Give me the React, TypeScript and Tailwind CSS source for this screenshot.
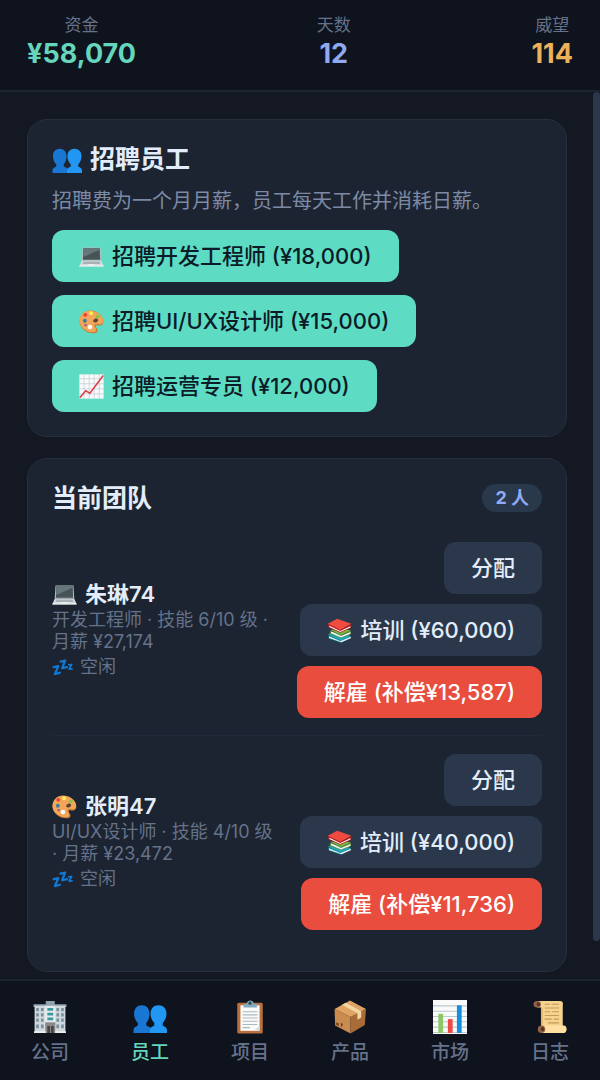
import type { ReactNode } from 'react'

type IconProps = { className: string }

function Svg({ className, children }: { className: string; children: ReactNode }) {
    return (
        <svg viewBox="0 0 64 64" className={`shrink-0 ${className}`} aria-hidden="true">
            {children}
        </svg>
    )
}

function People({ className }: IconProps) {
    return (
        <Svg className={className}>
            <path fill="#1976d2" d="M17 10c8 0 14 6 14 16 0 7-2 13-6 17v5c3 2 8 2 9 7v7H1v-6c1-6 6-6 8-8v-5C5 39 2 33 2 26c0-10 6-16 15-16z" />
            <path fill="#2196f3" d="M48 10c9 0 15 6 15 16 0 7-3 13-7 17v5c2 2 7 2 8 8v6H32v-7c1-5 6-5 8-7v-5c-4-4-7-10-7-17 0-10 6-16 15-16z" />
        </Svg>
    )
}

function Laptop({ className }: IconProps) {
    return (
        <Svg className={className}>
            <path fill="#b5bdc0" d="M9 9h46l2 34H7z" />
            <path fill="#465357" d="M11 11h42l1 29H10z" />
            <path fill="#66777a" d="M11 11h42v4L11 33z" />
            <path fill="#d8dddf" d="M7 43h50l6 13H1z" />
            <path fill="#a8b1b5" d="M11 45h42l2 6H9z" />
            <path fill="#f2f4f4" d="M1 55h62v3H1z" />
            <path fill="#eceff1" d="M25 51h14l1 4H24z" />
        </Svg>
    )
}

function Palette({ className }: IconProps) {
    return (
        <Svg className={className}>
            <path fill="#c97d36" d="M2 26C6 7 24 0 41 6c15 6 23 18 21 29-2 8-9 8-13 7-6-1-8 2-4 7 5 6 2 13-5 13C18 64-3 45 2 26z" />
            <path fill="#f2a65a" d="M2 24C7 6 25 1 41 7c15 5 22 17 20 26-2 7-9 7-13 5-8-2-11 4-7 9 5 6 3 12-4 12C17 60-3 43 2 24z" />
            <path fill="#5c4037" d="M39 26c4-3 10-1 10 3s-6 7-10 5-3-6 0-8z" />
            <circle cx="16" cy="15" r="5" fill="#f44336" />
            <circle cx="31" cy="11" r="5" fill="#ffee58" />
            <circle cx="48" cy="19" r="5" fill="#8bc34a" />
            <circle cx="15" cy="30" r="5" fill="#3e7ca0" />
            <circle cx="28" cy="46" r="6" fill="#fafafa" />
            <path fill="#8d5a97" d="M15 38l6 2-3 5-5-3z" />
        </Svg>
    )
}

function Rising({ className }: IconProps) {
    return (
        <Svg className={className}>
            <path fill="#fafafa" d="M1 1h62v62H1z" />
            <path stroke="#c3cfd6" strokeWidth="2" d="M13 1v62M26 1v62M39 1v62M52 1v62M1 12h62M1 25h62M1 38h62M1 51h62" />
            <path fill="none" stroke="#d9424a" strokeWidth="4" d="M2 61l15-18 11 6L62 4" />
        </Svg>
    )
}

function Books({ className }: IconProps) {
    return (
        <Svg className={className}>
            <path fill="#00838f" d="M3 46l26-7 33 11-23 12c-3 1-5 1-8 0L5 53z" />
            <path fill="#eceff1" d="M5 47l29 12 27-11v4L37 62 5 51z" />
            <path fill="#22a5bb" d="M2 42l26-7 34 12-27 11z" />
            <path fill="#558b2f" d="M7 33l29 10 25-11v5l-1 5-24 9L7 41z" />
            <path fill="#f5f5f5" d="M11 34l25 12 24-10v4L36 50 10 39z" />
            <path fill="#7cb342" d="M8 31l28-5 25 6-25 11z" />
            <path fill="#b71c1c" d="M2 15l32 14 28-13v3l-2 7-26 12L4 24z" />
            <path fill="#fafafa" d="M6 20l28 13 26-12v3L34 36 6 23z" />
            <path fill="#ef4b40" d="M2 15L26 2l36 13-28 15z" />
        </Svg>
    )
}

function Sleep({ className }: IconProps) {
    return (
        <Svg className={className}>
            <g fill="none" stroke="#1277cf" strokeLinejoin="round" strokeLinecap="round">
                <path strokeWidth="7" d="M5 31l14-3L9 52l15-4" />
                <path strokeWidth="7" d="M26 14l14-3-9 23 15-3" />
                <path strokeWidth="5" d="M51 24l9-1-8 14 9-1" />
            </g>
        </Svg>
    )
}

function Building({ className }: IconProps) {
    return (
        <Svg className={className}>
            <path fill="#90a4ae" d="M24 2h17v6h22v5H1V8h23z" />
            <path fill="#cfd8dc" d="M3 11h58v51H3z" />
            <path fill="#e4eaec" d="M22 11h20v51H22z" />
            <path fill="#78909c" d="M6 15h5v6H6zm9 0h5v6h-5zm29 0h5v6h-5zm9 0h5v6h-5zM6 25h5v6H6zm9 0h5v6h-5zm29 0h5v6h-5zm9 0h5v6h-5zM6 35h5v6H6zm9 0h5v6h-5zm29 0h5v6h-5zm9 0h5v6h-5zM6 46h5v7H6zm9 0h5v7h-5zm29 0h5v7h-5zm9 0h5v7h-5z" />
            <path fill="#38999f" d="M27 15h11v5H27zm0 9h11v5H27zm0 9h11v5H27z" />
            <path fill="#8b8787" d="M23 42h19v20H23z" />
            <path fill="#454545" d="M27 49h5v13h-5zm7 0h5v13h-5z" />
            <path fill="#eceff1" d="M2 59h22v3H2zm40 0h20v3H42z" />
        </Svg>
    )
}

function Clipboard({ className }: IconProps) {
    return (
        <Svg className={className}>
            <rect x="8" y="5" width="48" height="58" rx="3" fill="#b8703e" />
            <path fill="#fafafa" d="M14 10h36v48H14z" />
            <path fill="#d5dce0" d="M39 58l11-9v9z" />
            <path stroke="#abb9bf" strokeWidth="2" d="M18 22h28M18 28h28M18 34h28M18 40h28M18 46h28M18 52h14" />
            <path fill="#82aabd" d="M20 14V9c0-2 3-2 6-2 1-8 12-8 13 0 3 0 6 0 6 2v5z" />
            <circle cx="32" cy="6" r="3" fill="#344754" />
        </Svg>
    )
}

function Parcel({ className }: IconProps) {
    return (
        <Svg className={className}>
            <path fill="#c98c4e" d="M3 17l30 15v31L4 48z" />
            <path fill="#a86c38" d="M33 32l29-15-2 30-27 16z" />
            <path fill="#dfa364" d="M3 17L32 1l30 16-29 15z" />
            <path fill="#f4d5a4" d="M17 9l7-4 29 16v12l-7 4V25z" />
            <path fill="#734822" d="M6 42l5 2v5l-5-2zm8 1l5 2-3 7z" />
        </Svg>
    )
}

function Bars({ className }: IconProps) {
    return (
        <Svg className={className}>
            <path fill="#fafafa" d="M0 0h64v64H0z" />
            <path stroke="#bdc9d0" strokeWidth="2" d="M0 11h64M0 21h64M0 31h64M0 41h64M0 51h64M0 61h64" />
            <path fill="#8bc967" d="M10 26h9v36h-9z" />
            <path fill="#ed4a45" d="M28 36h9v26h-9z" />
            <path fill="#168ede" d="M45 10h9v52h-9z" />
        </Svg>
    )
}

function Scroll({ className }: IconProps) {
    return (
        <Svg className={className}>
            <path fill="#f5d28e" d="M8 2h43c5 0 6 4 5 8v42H15V14H8z" />
            <path fill="#e6b96c" d="M15 14h4v36h-4z" />
            <path fill="#ffe0a0" d="M16 48h42c7 0 7 14 0 14H16z" />
            <path stroke="#c79a5b" strokeWidth="2" d="M22 8h10M35 8h14M22 15h27M22 22h10M36 22h13M22 29h27M22 36h13M39 36h10M28 43h21" />
            <ellipse cx="8" cy="8" rx="7" ry="6" fill="#946043" />
            <ellipse cx="10" cy="8" rx="3" ry="4" fill="#4e342e" />
            <ellipse cx="16" cy="55" rx="7" ry="7" fill="#946043" />
            <ellipse cx="18" cy="55" rx="3" ry="4" fill="#4e342e" />
        </Svg>
    )
}

const stats = [
    { label: '资金', value: '¥58,070', color: 'text-[#65d6bc]' },
    { label: '天数', value: '12', color: 'text-[#8faaf2]' },
    { label: '威望', value: '114', color: 'text-[#ecb159]' },
]

const hires = [
    { Icon: Laptop, text: '招聘开发工程师 (¥18,000)' },
    { Icon: Palette, text: '招聘UI/UX设计师 (¥15,000)' },
    { Icon: Rising, text: '招聘运营专员 (¥12,000)' },
]

const team = [
    { Icon: Laptop, name: '朱琳74', info: '开发工程师 · 技能 6/10 级 · 月薪 ¥27,174', train: '¥60,000', fire: '¥13,587' },
    { Icon: Palette, name: '张明47', info: 'UI/UX设计师 · 技能 4/10 级 ·\u00a0月薪 ¥23,472', train: '¥40,000', fire: '¥11,736' },
]

const tabs = [
    { Icon: Building, text: '公司' },
    { Icon: People, text: '员工', active: true },
    { Icon: Clipboard, text: '项目' },
    { Icon: Parcel, text: '产品' },
    { Icon: Bars, text: '市场' },
    { Icon: Scroll, text: '日志' },
]

const button = 'flex items-center gap-2 h-[52px] px-[27px] rounded-xl text-[22px] leading-[30px] font-medium whitespace-nowrap cursor-pointer'

export default function App() {
    return (
        <div className="min-h-screen flex flex-col bg-[#131823] text-[#e3edfa] font-['Inter','Noto_Sans_CJK_SC',sans-serif]">
            <header className="flex justify-between px-[27px] pt-[14px] pb-[18px] bg-[#0e131e] border-b-2 border-[#1d2430]">
                {stats.map((s) => (
                    <div key={s.label} className="flex flex-col items-center">
                        <span className="text-[17px] leading-[22px] text-[#65728a]">{s.label}</span>
                        <span className={`text-[27px] leading-9 font-bold ${s.color}`}>{s.value}</span>
                    </div>
                ))}
            </header>

            <div className="flex flex-1">
                <main className="flex-1 min-w-0 flex flex-col gap-[21px] pl-[27px] pr-[26px] pt-[27px] pb-[7px]">
                    <section className="p-6 rounded-[20px] bg-[#1c2431] border border-[#262f3d]">
                        <h2 className="flex items-center gap-2 text-[25px] leading-[30px] font-bold">
                            <People className="size-[30px]" />
                            招聘员工
                        </h2>
                        <p className="mt-3 text-[20px] leading-[30px] text-[#7d8aa5]">招聘费为一个月月薪，员工每天工作并消耗日薪。</p>
                        <div className="mt-[14px] flex flex-col items-start gap-[13px]">
                            {hires.map(({ Icon, text }) => (
                                <button key={text} type="button" className={`${button} bg-[#5edbc3] text-[#0c1b28]`}>
                                    <Icon className="size-[25px]" />
                                    {text}
                                </button>
                            ))}
                        </div>
                    </section>

                    <section className="p-6 rounded-[20px] bg-[#1c2431] border border-[#262f3d]">
                        <div className="flex items-center justify-between mb-[11px]">
                            <h2 className="text-[25px] leading-[30px] font-bold">当前团队</h2>
                            <span className="px-[13px] rounded-full bg-[#2a384b] text-[18px] leading-7 font-bold text-[#8faaf2]">2 人</span>
                        </div>
                        <ul>
                            {team.map(({ Icon, name, info, train, fire }) => (
                                <li key={name} className="flex items-center gap-3 pt-[18px] pb-[17px] border-b border-[#202938] last:border-0">
                                    <div className="flex-1 min-w-0">
                                        <h3 className="flex items-center gap-2 text-[22px] leading-[30px] font-semibold">
                                            <Icon className="size-[25px]" />
                                            {name}
                                        </h3>
                                        <p className="text-[18px] leading-[22px] text-[#65728a]">{info}</p>
                                        <p className="flex items-center gap-[7px] text-[18px] leading-7 text-[#65728a]">
                                            <Sleep className="size-[21px]" />
                                            空闲
                                        </p>
                                    </div>
                                    <div className="flex flex-col items-end gap-[10px]">
                                        <button type="button" className={`${button} bg-[#2b384c]`}>分配</button>
                                        <button type="button" className={`${button} bg-[#2b384c]`}>
                                            <Books className="size-[25px]" />
                                            培训 ({train})
                                        </button>
                                        <button type="button" className={`${button} bg-[#e84d3d] text-white`}>解雇 (补偿{fire})</button>
                                    </div>
                                </li>
                            ))}
                        </ul>
                    </section>
                </main>
                <div className="w-[7px] mb-[38px] rounded-full bg-[#2b384b]" />
            </div>

            <nav className="grid grid-cols-6 pt-[19px] pb-[14px] bg-[#0e131e] border-t-2 border-[#1d2430]">
                {tabs.map(({ Icon, text, active }) => (
                    <button key={text} type="button" className={`flex flex-col items-center gap-[6px] text-[19px] leading-[26px] font-medium cursor-pointer ${active ? 'text-[#65d6bc]' : 'text-[#65728a]'}`}>
                        <Icon className="size-[34px]" />
                        {text}
                    </button>
                ))}
            </nav>
        </div>
    )
}
